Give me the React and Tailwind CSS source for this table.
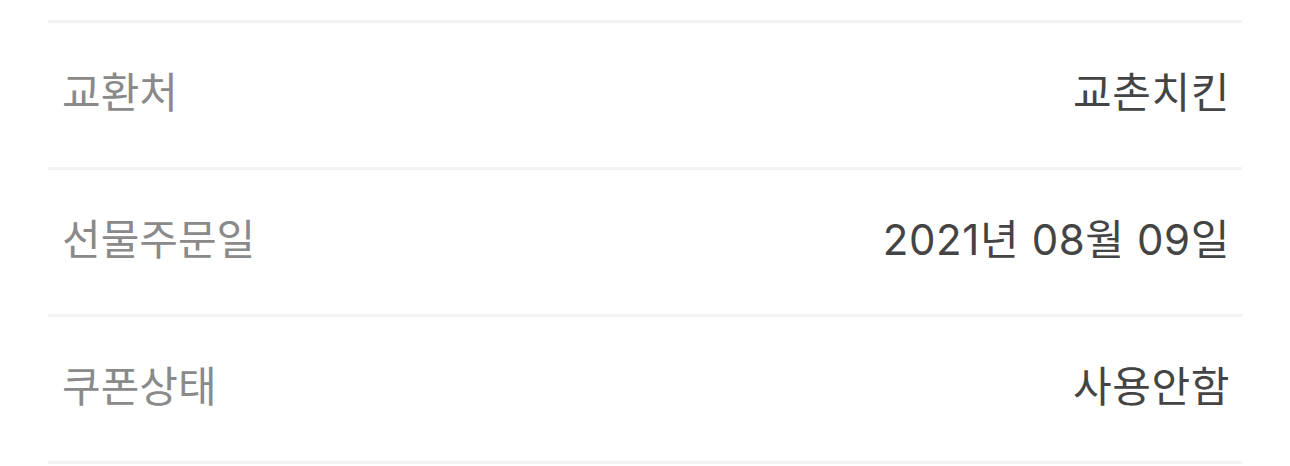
const rows = [
  ["교환처", "교촌치킨"],
  ["선물주문일", "2021년 08월 09일"],
  ["쿠폰상태", "사용안함"],
];

export default function App() {
  return (
    <div className="min-h-[466px] bg-white px-12 pt-5 font-['Inter','Noto_Sans_CJK_KR',sans-serif]">
      {rows.map(([label, value]) => (
        <div
          key={label}
          className="flex h-[147px] items-center justify-between border-t-[3px] border-[#f3f3f3] pl-[14px] pr-3 pb-1"
        >
          <span className="text-[42px] leading-none text-[#8a8a8a]">{label}</span>
          <span className="text-[42px] leading-none tracking-[0.6px] text-[#444]">
            {value}
          </span>
        </div>
      ))}
      <div className="h-[3px] bg-[#f3f3f3]" />
    </div>
  );
}
